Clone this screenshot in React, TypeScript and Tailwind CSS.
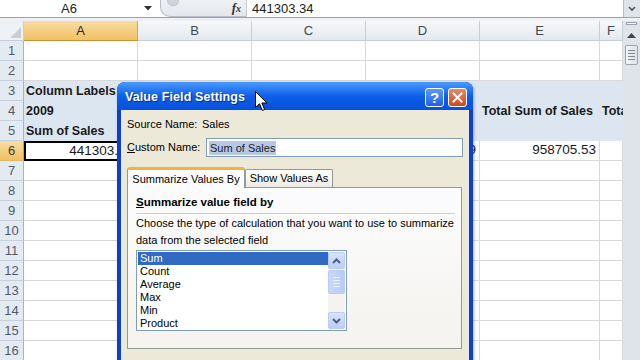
import React from "react";

const COLS = [114, 114, 114, 114, 120, 23];
const LETTERS = ["A", "B", "C", "D", "E", "F"];

type Cell = { t: string; bold?: boolean; right?: boolean };
const DATA: Record<number, Record<number, Cell>> = {
  3: { 0: { t: "Column Labels", bold: true } },
  4: {
    0: { t: "2009", bold: true },
    1: { t: "2010", bold: true },
    4: { t: "Total Sum of Sales", bold: true },
    5: { t: "Total Count of Sales", bold: true },
  },
  5: { 0: { t: "Sum of Sales", bold: true }, 1: { t: "Sum of Sales", bold: true } },
  6: {
    0: { t: "441303.34", right: true },
    3: { t: "517402.19", right: true },
    4: { t: "958705.53", right: true },
  },
};

function Row({ n }: { n: number }) {
  const blue = n >= 3 && n <= 5;
  const sel = n === 6;
  return (
    <div className="flex h-[20px]">
      <div
        className={
          "w-[24px] shrink-0 flex items-center justify-center text-[13px] border-r border-b " +
          (sel
            ? "bg-gradient-to-b from-[#f9dca4] to-[#f1c15f] text-[#3a3a3a] border-r-[#d59f3a] border-b-[#e2b866]"
            : "bg-[#e4eaf2] text-[#505a66] border-r-[#9eb6ce] border-b-[#c5d1de]")
        }
      >
        {n}
      </div>
      {COLS.map((w, c) => {
        const cell = DATA[n]?.[c];
        const isA6 = sel && c === 0;
        return (
          <div
            key={c}
            style={{ width: w }}
            className={
              "shrink-0 overflow-hidden whitespace-nowrap flex items-center text-[#1a1a1a] " +
              (cell?.bold ? "font-bold text-[12.5px] " : "text-[13.5px] ") +
              (cell?.right ? "justify-end pr-[3px] " : "pl-[2px] ") +
              (isA6
                ? "border-2 border-black "
                : blue
                ? "bg-[#dce6f1] "
                : "border-r border-b border-[#d8d8d8] ")
            }
          >
            {cell?.t}
          </div>
        );
      })}
      <div className="w-[17px] shrink-0 bg-[#dfe3ea]" />
    </div>
  );
}

function Cursor() {
  return (
    <svg className="absolute left-[255px] top-[91px]" width="13" height="21" viewBox="0 0 13 21">
      <path d="M0.5 0.5 L0.5 16.5 L4.5 12.8 L7.3 19.5 L9.6 18.5 L6.9 12 L12 12 Z" fill="#fff" stroke="#000" strokeWidth="1" strokeLinejoin="round" />
    </svg>
  );
}

function Dialog() {
  return (
    <div className="absolute left-[117px] top-[82px] w-[356px] h-[290px] rounded-t-[8px] bg-[#0a3fd0] flex flex-col overflow-hidden shadow-[1px_1px_3px_rgba(0,0,0,0.3)]">
      {/* title bar */}
      <div className="h-[28px] shrink-0 flex items-center pt-[2px] pl-[8px] pr-[6px] bg-gradient-to-b from-[#4a9bff] via-[#0c5fe8] to-[#0650dc]">
        <span
          className="text-white font-bold text-[12.5px] tracking-[0.1px]"
          style={{ textShadow: "1px 1px 0 #0a2a8a" }}
        >
          Value Field Settings
        </span>
        <div className="ml-auto flex gap-[4px] items-center">
          <div className="w-[19px] h-[19px] rounded-[3px] border border-white bg-gradient-to-b from-[#5a9af8] to-[#1e5ee6] flex items-center justify-center text-white font-bold text-[15px] leading-none">
            ?
          </div>
          <div className="w-[19px] h-[19px] rounded-[3px] border border-white bg-gradient-to-b from-[#e8886a] to-[#cc4722] flex items-center justify-center">
            <svg width="11" height="11" viewBox="0 0 11 11">
              <path d="M1.5 1.5 L9.5 9.5 M9.5 1.5 L1.5 9.5" stroke="#fff" strokeWidth="2" strokeLinecap="square" />
            </svg>
          </div>
        </div>
      </div>
      {/* body */}
      <div className="flex-1 mx-[4px] bg-[#ece9d8] flex flex-col pl-[6px] pr-[6px] text-[11px] text-black">
        <div className="flex items-center h-[14px] mt-[7px]">
          <span className="w-[75px]">Source Name:</span>
          <span>Sales</span>
        </div>
        <div className="flex items-center mt-[7px] h-[19px]">
          <span className="w-[79px]">
            <span className="underline">C</span>ustom Name:
          </span>
          <div className="w-[257px] h-[19px] bg-white border border-[#7f9db9] flex items-center pl-[2px]">
            <span className="bg-[#b5c8e8] text-[#222] px-[1px] leading-[14px]">Sum of Sales</span>
          </div>
        </div>
        {/* tabs */}
        <div className="flex items-end mt-[9px] h-[21px]">
          <div className="w-[118px] h-[21px] rounded-t-[3px] border-t-[3px] border-t-[#f5b13c] border-x border-x-[#919b9c] bg-[#fcfcfe] flex items-center justify-center relative z-10 -mb-px">
            Summarize Values By
          </div>
          <div className="w-[88px] h-[18px] rounded-t-[2px] border border-b-0 border-[#919b9c] bg-gradient-to-b from-white to-[#ecebe6] flex items-center justify-center">
            Show Values As
          </div>
        </div>
        <div className="w-[335px] h-[162px] border border-[#919b9c] bg-gradient-to-b from-[#fcfcfe] to-[#f4f3ee] flex flex-col pl-[8px] pr-[6px]">
          <div className="mt-[8px] h-[14px] flex items-center font-bold text-[11.5px]">
            <span className="underline">S</span>ummarize value field by
          </div>
          <div className="mt-[3px] h-px bg-[#d0d0bf] w-[319px]" />
          <div className="mt-[1px] leading-[17px]">
            Choose the type of calculation that you want to use to summarize
            <br />
            data from the selected field
          </div>
          <div className="mt-[1px] w-[211px] h-[81px] border border-[#7f9db9] bg-white flex p-px">
            <div className="flex-1 flex flex-col">
              {["Sum", "Count", "Average", "Max", "Min", "Product"].map((it, i) => (
                <div
                  key={it}
                  className={
                    "h-[13px] leading-[13px] pl-[2px] " +
                    (i === 0 ? "bg-[#316ac5] text-white" : "")
                  }
                >
                  {it}
                </div>
              ))}
            </div>
            <div className="w-[17px] flex flex-col bg-[#f4f3ee]">
              <div className="h-[17px] rounded-[2px] border border-[#b9cbf3] bg-gradient-to-b from-[#d9e4fd] to-[#b8cdf8] flex items-center justify-center">
                <svg width="9" height="6" viewBox="0 0 9 6"><path d="M1 5 L4.5 1.5 L8 5" stroke="#4d6185" strokeWidth="2" fill="none" /></svg>
              </div>
              <div className="h-[24px] mt-px rounded-[2px] border border-[#b9cbf3] bg-gradient-to-r from-[#c9d8fc] to-[#b6cbf6] flex flex-col items-center justify-center gap-[2px]">
                <div className="w-[7px] h-px bg-[#eef3ff]" />
                <div className="w-[7px] h-px bg-[#eef3ff]" />
                <div className="w-[7px] h-px bg-[#eef3ff]" />
                <div className="w-[7px] h-px bg-[#eef3ff]" />
              </div>
              <div className="flex-1" />
              <div className="h-[17px] rounded-[2px] border border-[#b9cbf3] bg-gradient-to-b from-[#d9e4fd] to-[#b8cdf8] flex items-center justify-center">
                <svg width="9" height="6" viewBox="0 0 9 6"><path d="M1 1 L4.5 4.5 L8 1" stroke="#4d6185" strokeWidth="2" fill="none" /></svg>
              </div>
            </div>
          </div>
        </div>
      </div>
    </div>
  );
}

export default function App() {
  return (
    <div
      className="relative w-[640px] h-[360px] overflow-hidden bg-white"
      style={{ fontFamily: '"Liberation Sans", Arial, sans-serif' }}
    >
      {/* formula bar */}
      <div className="flex h-[17px] items-center bg-white">
        <div className="w-[138px] text-center text-[13px] text-[#222]">A6</div>
        <svg className="ml-[6px]" width="8" height="5" viewBox="0 0 8 5"><path d="M0 0 L8 0 L4 4.5 Z" fill="#333" /></svg>
        <div className="ml-[8px] w-[86px] h-[17px] rounded-bl-[10px] border-l border-b border-[#b8bec8] bg-gradient-to-b from-[#f0f2f5] to-[#e3e6eb] flex items-center relative">
          <div className="absolute left-[6px] top-[-4px] w-[12px] h-[10px] rounded-full bg-[#d0d5dc] border border-[#c0c6ce]" />
          <span className="ml-auto mr-[5px] text-[13px] italic font-bold text-[#333]" style={{ fontFamily: '"Liberation Serif", serif' }}>
            f<span className="text-[10px]">x</span>
          </span>
        </div>
        <div className="flex-1 h-[17px] border-l border-[#c8ccd2] pl-[5px] text-[13px] text-[#222] flex items-center">441303.34</div>
        <div className="w-[17px] h-[17px] bg-[#dfe3ea] border-l border-[#b8bec8] flex items-center justify-center">
          <svg width="8" height="6" viewBox="0 0 8 6"><path d="M1 1 L4 4 L7 1" stroke="#555" strokeWidth="1.6" fill="none" /></svg>
        </div>
      </div>
      <div className="h-[4px] border-t border-[#9aa3ae] bg-[#eef0f3]" />
      {/* header row */}
      <div className="flex h-[20px]">
        <div className="w-[24px] shrink-0 bg-[#eef1f5] border-r border-b border-[#c5cdd8] relative">
          <svg className="absolute right-[2px] bottom-[2px]" width="11" height="11" viewBox="0 0 11 11"><path d="M11 0 L11 11 L0 11 Z" fill="#c9ced6" /></svg>
        </div>
        {COLS.map((w, c) => (
          <div
            key={c}
            style={{ width: w }}
            className={
              "shrink-0 flex items-center justify-center text-[13px] border-r border-b " +
              (c === 0
                ? "bg-gradient-to-b from-[#f9dca4] to-[#f1c15f] text-[#2a2a2a] border-r-[#d9a640] border-b-[#c99332]"
                : "bg-gradient-to-b from-[#f7f8fa] to-[#e4e8ed] text-[#404a56] border-[#c5cdd8]")
            }
          >
            {LETTERS[c]}
          </div>
        ))}
        <div className="w-[17px] shrink-0 bg-[#dfe3ea] relative">
          <div className="absolute left-[3px] top-[1px] w-[11px] h-[3px] border border-[#9aa3ae] bg-[#f2f4f7]" />
          <svg className="absolute left-[4px] top-[12px]" width="9" height="5" viewBox="0 0 9 5"><path d="M0 5 L4.5 0 L9 5 Z" fill="#444" /></svg>
        </div>
      </div>
      {Array.from({ length: 16 }, (_, i) => (
        <Row key={i} n={i + 1} />
      ))}
      {/* scrollbar thumb overlay on scroll track */}
      <div className="absolute left-[625px] top-[45px] w-[13px] h-[20px] rounded-[2px] border border-[#9aa3ae] bg-gradient-to-r from-[#f4f6f9] to-[#dde2e9] flex flex-col items-center justify-center gap-[2px]">
        <div className="w-[7px] h-px bg-[#7d8794]" />
        <div className="w-[7px] h-px bg-[#7d8794]" />
        <div className="w-[7px] h-px bg-[#7d8794]" />
        <div className="w-[7px] h-px bg-[#7d8794]" />
      </div>
      <Dialog />
      <Cursor />
    </div>
  );
}
